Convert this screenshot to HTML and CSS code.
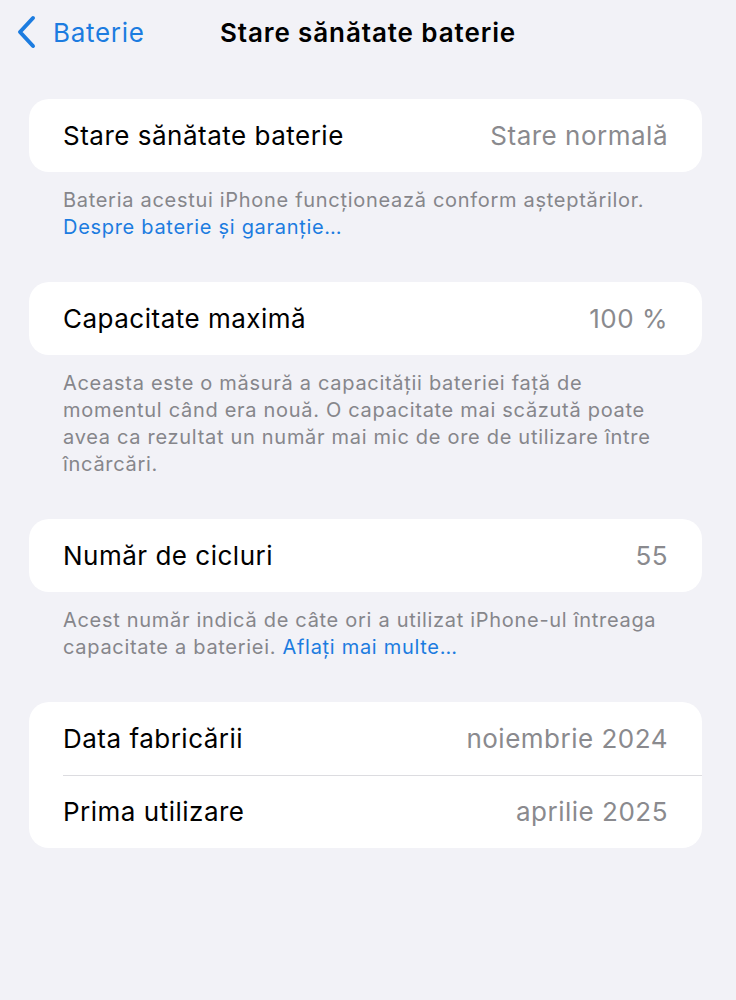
FILE: index.html
```
<!DOCTYPE html>
<html lang="ro">
<head>
<meta charset="utf-8">
<link rel="stylesheet" href="styles.css">
</head>
<body>
<header class="nav">
  <a class="back">
    <svg class="chev" width="22" height="34" viewBox="0 0 22 34"><path d="M17 3 L4 17 L17 31" fill="none" stroke="#1c7ce0" stroke-width="4" stroke-linecap="round" stroke-linejoin="round"/></svg>
    <span class="back-label">Baterie</span>
  </a>
  <h1 class="title">Stare sănătate baterie</h1>
</header>
<main class="content">
  <section class="card">
    <div class="row"><span class="label">Stare sănătate baterie</span><span class="value">Stare normală</span></div>
  </section>
  <p class="note">Bateria acestui iPhone funcționează conform așteptărilor.<br><a class="link">Despre baterie și garanție…</a></p>

  <section class="card">
    <div class="row"><span class="label">Capacitate maximă</span><span class="value">100 %</span></div>
  </section>
  <p class="note">Aceasta este o măsură a capacității bateriei față de<br>momentul când era nouă. O capacitate mai scăzută poate<br>avea ca rezultat un număr mai mic de ore de utilizare între<br>încărcări.</p>

  <section class="card">
    <div class="row"><span class="label">Număr de cicluri</span><span class="value">55</span></div>
  </section>
  <p class="note">Acest număr indică de câte ori a utilizat iPhone-ul întreaga<br>capacitate a bateriei. <a class="link">Aflați mai multe…</a></p>

  <section class="card">
    <div class="row"><span class="label">Data fabricării</span><span class="value">noiembrie 2024</span></div>
    <div class="row sep"><span class="label">Prima utilizare</span><span class="value">aprilie 2025</span></div>
  </section>
</main>
</body>
</html>
```
FILE: styles.css
```
* { box-sizing: border-box; }
html, body { margin: 0; padding: 0; }
body {
  background: #f2f2f7;
  font-family: Inter, Roboto, "Liberation Sans", sans-serif;
  color: #000;
  width: 736px;
  height: 1000px;
  overflow: hidden;
}
.nav {
  position: relative;
  height: 64px;
  display: flex;
  align-items: center;
}
.back {
  display: flex;
  align-items: center;
  padding-left: 16px;
  color: #1c7ce0;
}
.chev { display: block; }
.back-label {
  font-size: 26px;
  margin-left: 15px;
  letter-spacing: 0.7px;
}
.title {
  position: absolute;
  left: 0;
  right: 0;
  top: 0;
  height: 64px;
  margin: 0;
  display: flex;
  align-items: center;
  justify-content: center;
  font-size: 26px;
  font-weight: 600;
  letter-spacing: 0.9px;
}
.content {
  padding-top: 35px;
}
.card {
  background: #fff;
  margin: 0 34px 0 29px;
  border-radius: 20px;
  overflow: hidden;
}
.row {
  height: 73px;
  display: flex;
  align-items: center;
  justify-content: space-between;
  padding: 0 34px;
  font-size: 26px;
  letter-spacing: 0.5px;
  position: relative;
}
.row.sep::before {
  content: "";
  position: absolute;
  top: 0;
  left: 34px;
  right: 0;
  height: 1px;
  background: #dcdce0;
}
.value { color: #8a8a8e; }
.note {
  margin: 15px 34px 41px 63px;
  font-size: 20px;
  line-height: 27px;
  color: #86868b;
  letter-spacing: 0.7px;
}
.link { color: #1c7ce0; }
```
